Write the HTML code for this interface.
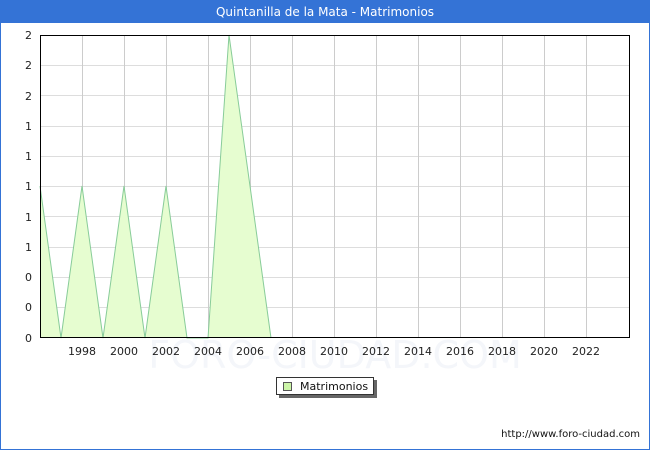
<!DOCTYPE html>
<html><head><style>
body{margin:0;width:650px;height:450px;overflow:hidden;font-family:"DejaVu Sans","Liberation Sans",sans-serif;}
</style></head><body>
<svg width="650" height="450" xmlns="http://www.w3.org/2000/svg" font-family="DejaVu Sans, Liberation Sans, sans-serif">
<rect x="0" y="0" width="650" height="450" fill="#fff"/>
<rect x="0.5" y="0.5" width="649" height="449" fill="none" stroke="#3473d6"/>
<rect x="0" y="0" width="650" height="23" fill="#3473d6"/>
<text x="325" y="16" text-anchor="middle" fill="#fff" font-size="12">Quintanilla de la Mata - Matrimonios</text>
<text x="335" y="368" text-anchor="middle" fill="#f4f6fa" font-size="38">FORO-CIUDAD.COM</text>
<g stroke="#ddd" stroke-width="1">
<line x1="40" x2="630" y1="65.5" y2="65.5"/><line x1="40" x2="630" y1="95.5" y2="95.5"/>
<line x1="40" x2="630" y1="126.5" y2="126.5"/><line x1="40" x2="630" y1="156.5" y2="156.5"/>
<line x1="40" x2="630" y1="186.5" y2="186.5"/><line x1="40" x2="630" y1="216.5" y2="216.5"/>
<line x1="40" x2="630" y1="247.5" y2="247.5"/><line x1="40" x2="630" y1="277.5" y2="277.5"/>
<line x1="40" x2="630" y1="307.5" y2="307.5"/>
</g>
<g stroke="#ccc" stroke-width="1">
<line x1="82.5" x2="82.5" y1="35" y2="338"/><line x1="124.5" x2="124.5" y1="35" y2="338"/>
<line x1="166.5" x2="166.5" y1="35" y2="338"/><line x1="208.5" x2="208.5" y1="35" y2="338"/>
<line x1="250.5" x2="250.5" y1="35" y2="338"/><line x1="292.5" x2="292.5" y1="35" y2="338"/>
<line x1="334.5" x2="334.5" y1="35" y2="338"/><line x1="376.5" x2="376.5" y1="35" y2="338"/>
<line x1="418.5" x2="418.5" y1="35" y2="338"/><line x1="460.5" x2="460.5" y1="35" y2="338"/>
<line x1="502.5" x2="502.5" y1="35" y2="338"/><line x1="544.5" x2="544.5" y1="35" y2="338"/>
<line x1="586.5" x2="586.5" y1="35" y2="338"/>
</g>
<polygon points="40,338 40,186 61,338 82,186 103,338 124,186 145,338 166,186 187,338 208,338 229,35 250,186 271,338" fill="#e6fdd0" stroke="none"/>
<polyline points="40,186 61,338 82,186 103,338 124,186 145,338 166,186 187,338 208,338 229,35 250,186 271,338" fill="none" stroke="#88cc99" stroke-width="1"/>
<rect x="40.5" y="35.5" width="589" height="302" fill="none" stroke="#000"/>
<g font-size="11" fill="#222" text-anchor="end">
<text x="32" y="39">2</text><text x="32" y="69">2</text><text x="32" y="100">2</text>
<text x="32" y="130">1</text><text x="32" y="160">1</text><text x="32" y="190">1</text>
<text x="32" y="221">1</text><text x="32" y="251">1</text><text x="32" y="281">0</text>
<text x="32" y="311">0</text><text x="32" y="342">0</text>
</g>
<g font-size="11" fill="#222" text-anchor="middle">
<text x="82" y="355">1998</text><text x="124" y="355">2000</text><text x="166" y="355">2002</text>
<text x="208" y="355">2004</text><text x="250" y="355">2006</text><text x="292" y="355">2008</text>
<text x="334" y="355">2010</text><text x="376" y="355">2012</text><text x="418" y="355">2014</text>
<text x="460" y="355">2016</text><text x="502" y="355">2018</text><text x="544" y="355">2020</text>
<text x="586" y="355">2022</text>
</g>
<rect x="279" y="380" width="98" height="18" fill="#666"/>
<rect x="276.5" y="377.5" width="97" height="17" fill="#fff" stroke="#333"/>
<rect x="283.5" y="382.5" width="8" height="8" fill="#ccf5a8" stroke="#555"/>
<text x="300" y="390" font-size="11" fill="#111">Matrimonios</text>
<text x="640" y="437" text-anchor="end" font-size="10" fill="#111">http://www.foro-ciudad.com</text>
</svg>
</body></html>
